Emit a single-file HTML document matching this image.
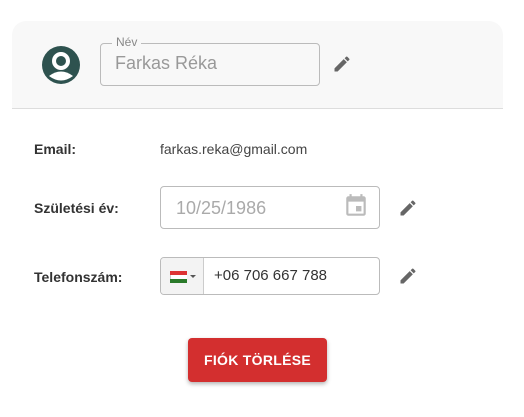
<!DOCTYPE html>
<html><head><meta charset="utf-8"><style>
*{box-sizing:border-box;margin:0;padding:0}
body{width:524px;height:417px;background:#fff;font-family:"Liberation Sans",sans-serif;position:relative;overflow:hidden}
.abs{position:absolute}
.head{left:12px;top:21px;width:491px;height:88px;background:#f8f8f8;border-radius:14px 14px 0 0;border-bottom:1px solid #ddd}
.field{border:1px solid #bbb;border-radius:4px}
.lbl{font-size:14px;color:#333;font-weight:bold}
</style></head><body>
<div class="abs head"></div>
<svg class="abs" style="left:42px;top:46px" width="38" height="38" viewBox="0 0 38 38">
<circle cx="19" cy="19" r="19" fill="#2e524f"/>
<circle cx="19" cy="15" r="7" fill="none" stroke="#fff" stroke-width="4"/>
<path d="M7 30 Q19 21 31 30 Q19 39 7 30Z" fill="#fff"/>
</svg>
<div class="abs field" style="left:100px;top:43px;width:220px;height:43px"></div>
<div class="abs" style="left:112px;top:35px;background:#f8f8f8;padding:0 4px;font-size:12px;color:#888">Név</div>
<div class="abs" style="left:115px;top:53px;font-size:18px;color:#999">Farkas Réka</div>
<svg class="abs" style="left:332px;top:54px" width="20" height="20" viewBox="0 0 24 24"><path fill="#666" d="M3 17.25V21h3.75L17.81 9.94l-3.75-3.75L3 17.25zM20.71 7.04a1 1 0 000-1.41l-2.34-2.34a1 1 0 00-1.41 0l-1.83 1.83 3.75 3.75 1.83-1.83z"/></svg>

<div class="abs lbl" style="left:34px;top:141px">Email:</div>
<div class="abs" style="left:160px;top:141px;font-size:14px;color:#444">farkas.reka@gmail.com</div>

<div class="abs lbl" style="left:34px;top:200px">Születési év:</div>
<div class="abs field" style="left:160px;top:186px;width:220px;height:43px"></div>
<div class="abs" style="left:176px;top:198px;font-size:18px;color:#aaa">10/25/1986</div>
<svg class="abs" style="left:343px;top:193px" width="26" height="26" viewBox="0 0 24 24"><path fill="#bbb" d="M17 12h-5v5h5v-5zM16 1v2H8V1H6v2H5a2 2 0 00-2 2v14a2 2 0 002 2h14a2 2 0 002-2V5a2 2 0 00-2-2h-1V1h-2zm3 18H5V8h14v11z"/></svg>
<svg class="abs" style="left:398px;top:198px" width="20" height="20" viewBox="0 0 24 24"><path fill="#666" d="M3 17.25V21h3.75L17.81 9.94l-3.75-3.75L3 17.25zM20.71 7.04a1 1 0 000-1.41l-2.34-2.34a1 1 0 00-1.41 0l-1.83 1.83 3.75 3.75 1.83-1.83z"/></svg>

<div class="abs lbl" style="left:34px;top:269px">Telefonszám:</div>
<div class="abs field" style="left:160px;top:257px;width:220px;height:38px;overflow:hidden">
<div class="abs" style="left:0;top:0;width:43px;height:36px;background:#f3f3f3;border-right:1px solid #ccc"></div>
<div class="abs" style="left:9px;top:13px;width:17px;height:4px;background:#d33"></div>
<div class="abs" style="left:9px;top:17px;width:17px;height:4px;background:#fff;border-left:1px solid #ccc"></div>
<div class="abs" style="left:9px;top:21px;width:17px;height:4px;background:#2a7a2a"></div>
<div class="abs" style="left:29px;top:17px;width:0;height:0;border-left:3px solid transparent;border-right:3px solid transparent;border-top:3px solid #555"></div>
</div>
<div class="abs" style="left:214px;top:267px;font-size:15px;color:#333">+06 706 667 788</div>
<svg class="abs" style="left:398px;top:266px" width="20" height="20" viewBox="0 0 24 24"><path fill="#666" d="M3 17.25V21h3.75L17.81 9.94l-3.75-3.75L3 17.25zM20.71 7.04a1 1 0 000-1.41l-2.34-2.34a1 1 0 00-1.41 0l-1.83 1.83 3.75 3.75 1.83-1.83z"/></svg>

<div class="abs" style="left:188px;top:338px;width:139px;height:44px;background:#d32f2f;border-radius:4px;box-shadow:0 2px 4px rgba(0,0,0,.3);color:#fff;font-weight:bold;font-size:14px;text-align:center;line-height:44px;letter-spacing:.3px">FIÓK TÖRLÉSE</div>
</body></html>
